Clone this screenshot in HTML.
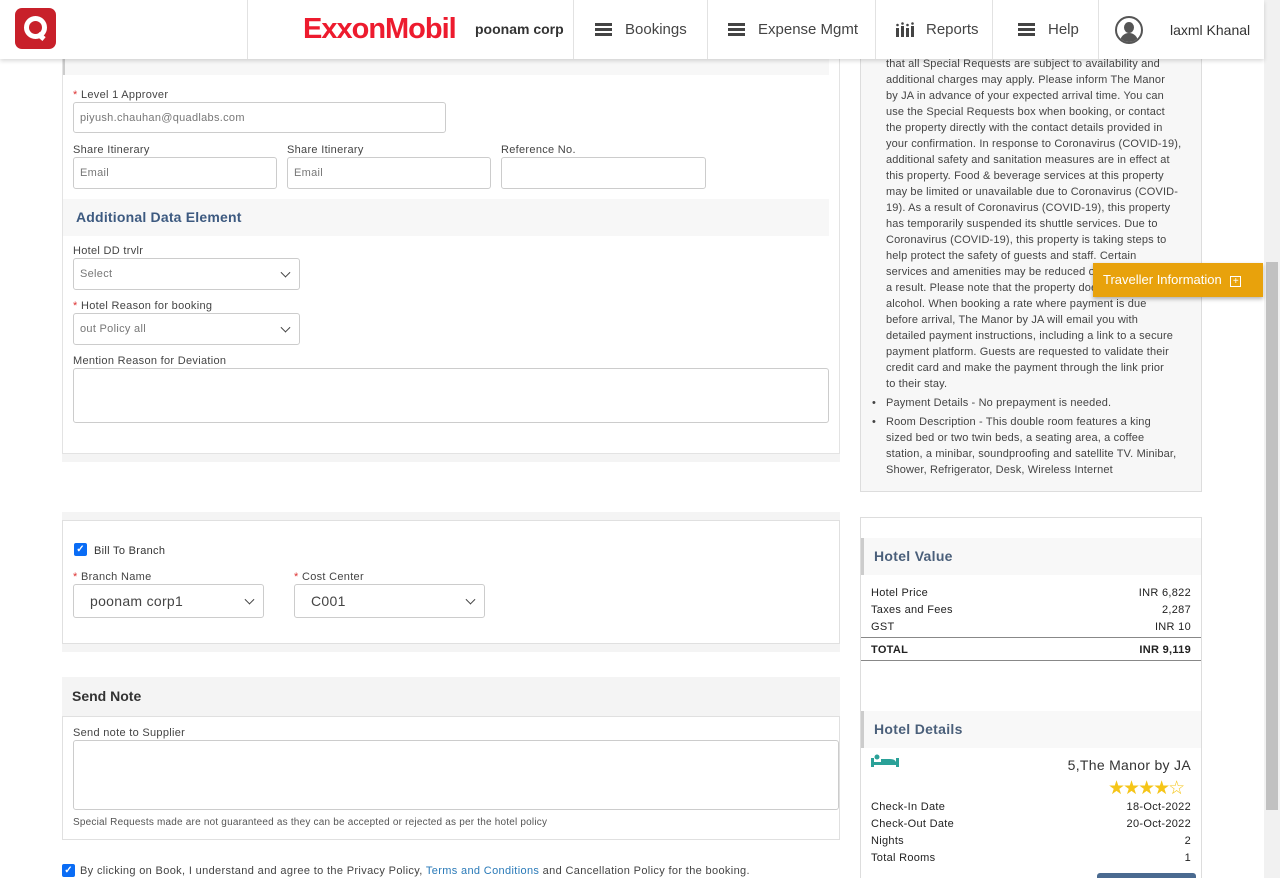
<!DOCTYPE html>
<html><head><meta charset="utf-8"><style>
*{box-sizing:border-box;margin:0;padding:0}
body{width:1280px;height:878px;overflow:hidden;background:#fff;font-family:"Liberation Sans",sans-serif;color:#333;position:relative}
.a{position:absolute}
.lbl{font-size:11px;color:#444;letter-spacing:.3px}
.req{color:#d33}
.inp{position:absolute;border:1px solid #ccc;border-radius:3px;background:#fff;font-size:11px;color:#777;padding-left:6px;display:flex;align-items:center;letter-spacing:.3px}
.sel::after{content:"";position:absolute;right:10px;top:50%;width:6px;height:6px;border-right:1.5px solid #444;border-bottom:1.5px solid #444;transform:translateY(-70%) rotate(45deg)}
.nav{position:absolute;top:0;height:59px;display:flex;align-items:center;font-size:15px;color:#444;border-left:1px solid #e2e2e2}
.ham{display:inline-block;width:17px;height:13px;border-top:3px solid #444;border-bottom:3px solid #444;position:relative;margin-right:13px}
.ham::after{content:"";position:absolute;left:0;right:0;top:2px;height:3px;background:#444}
.rp{font-size:11px;color:#444;line-height:16px;white-space:nowrap;letter-spacing:.15px}
.row{position:absolute;left:871px;width:320px;font-size:11px;color:#222;display:flex;justify-content:space-between;letter-spacing:.3px}
</style></head><body>
<div class="a" style="left:0;top:0;width:1264px;height:59px;background:#fff;box-shadow:0 2px 4px rgba(0,0,0,.15);z-index:5">
 <div class="a" style="left:15px;top:8px;width:41px;height:41px;background:#c8202a;border-radius:7px">
  <div class="a" style="left:9px;top:8px;width:23px;height:23px;border:5px solid #fff;border-radius:50%"></div>
  <div class="a" style="left:22px;top:26px;width:8px;height:5px;background:#fff;transform:rotate(40deg)"></div>
 </div>
 <div class="a" style="left:247px;top:0;height:59px;border-left:1px solid #e2e2e2"></div>
 <div class="a" style="left:303px;top:13px;font-size:29px;font-weight:bold;color:#ed1b2e;letter-spacing:-1px">ExxonMobil</div>
 <div class="a" style="left:475px;top:21px;font-size:14px;color:#333;font-weight:bold">poonam corp</div>
 <div class="nav" style="left:573px;width:134px;padding-left:21px"><span class="ham"></span>Bookings</div>
 <div class="nav" style="left:707px;width:168px;padding-left:20px"><span class="ham"></span>Expense Mgmt</div>
 <div class="nav" style="left:875px;width:117px;padding-left:20px"><svg width="18" height="15" viewBox="0 0 18 15" style="margin-right:12px"><rect x="0" y="6" width="3" height="9" fill="#444"/><rect x="5" y="4" width="3" height="11" fill="#444"/><rect x="10" y="6" width="3" height="9" fill="#444"/><rect x="15" y="4" width="3" height="11" fill="#444"/><circle cx="1.5" cy="3" r="1.3" fill="#444"/><circle cx="6.5" cy="1.5" r="1.3" fill="#444"/><circle cx="11.5" cy="3" r="1.3" fill="#444"/><circle cx="16.5" cy="1.5" r="1.3" fill="#444"/></svg>Reports</div>
 <div class="nav" style="left:992px;width:106px;padding-left:25px"><span class="ham"></span>Help</div>
 <div class="nav" style="left:1098px;width:166px;padding-left:16px"><span style="display:inline-block;width:28px;height:28px;border:2px solid #555;border-radius:50%;margin-right:27px;position:relative;overflow:hidden"><span class="a" style="left:7px;top:4px;width:10px;height:11px;background:#555;border-radius:50%"></span><span class="a" style="left:3px;top:15px;width:18px;height:12px;background:#555;border-radius:9px 9px 0 0"></span></span><span style="font-size:14px;color:#333">laxml Khanal</span></div>
</div>
<div class="a" style="left:1264px;top:0;width:16px;height:878px;background:#f1f1f1"></div>
<div class="a" style="left:1266px;top:262px;width:12px;height:548px;background:#c1c1c1"></div>

<div class="a" style="left:62px;top:56px;width:767px;height:19px;background:#f7f7f7;border-left:3px solid #ccc"></div>
<div class="a" style="left:62px;top:56px;width:778px;height:398px;border:1px solid #e3e3e3;border-top:none"></div>
<div class="a lbl" style="left:73px;top:89px"><span class="req">*</span> Level 1 Approver</div>
<div class="inp" style="left:73px;top:102px;width:373px;height:31px">piyush.chauhan@quadlabs.com</div>
<div class="a lbl" style="left:73px;top:144px">Share Itinerary</div>
<div class="a lbl" style="left:287px;top:144px">Share Itinerary</div>
<div class="a lbl" style="left:501px;top:144px">Reference No.</div>
<div class="inp" style="left:73px;top:157px;width:204px;height:32px">Email</div>
<div class="inp" style="left:287px;top:157px;width:204px;height:32px">Email</div>
<div class="inp" style="left:501px;top:157px;width:205px;height:32px"></div>
<div class="a" style="left:63px;top:199px;width:766px;height:37px;background:#f7f7f7;font-size:14px;color:#3d5a80;padding:10px 0 0 13px;font-weight:bold;letter-spacing:.2px">Additional Data Element</div>
<div class="a lbl" style="left:73px;top:245px">Hotel DD trvlr</div>
<div class="inp sel" style="left:73px;top:258px;width:227px;height:32px">Select</div>
<div class="a lbl" style="left:73px;top:300px"><span class="req">*</span> Hotel Reason for booking</div>
<div class="inp sel" style="left:73px;top:313px;width:227px;height:32px">out Policy all</div>
<div class="a lbl" style="left:73px;top:355px">Mention Reason for Deviation</div>
<div class="inp" style="left:73px;top:368px;width:756px;height:55px"></div>
<div class="a" style="left:62px;top:454px;width:778px;height:8px;background:#f4f4f4"></div>

<div class="a" style="left:62px;top:512px;width:778px;height:8px;background:#f4f4f4"></div>
<div class="a" style="left:62px;top:520px;width:778px;height:124px;border:1px solid #e0e0e0"></div>
<div class="a" style="left:74px;top:543px;width:13px;height:13px;background:#0a6cf5;border-radius:2px;color:#fff;font-size:10px;text-align:center;line-height:13px;font-weight:bold">✓</div>
<div class="a lbl" style="left:94px;top:545px;color:#333">Bill To Branch</div>
<div class="a lbl" style="left:73px;top:571px"><span class="req">*</span> Branch Name</div>
<div class="a lbl" style="left:294px;top:571px"><span class="req">*</span> Cost Center</div>
<div class="inp sel" style="left:73px;top:584px;width:191px;height:34px;font-size:14px;color:#444;padding-left:16px">poonam corp1</div>
<div class="inp sel" style="left:294px;top:584px;width:191px;height:34px;font-size:14px;color:#444;padding-left:16px">C001</div>
<div class="a" style="left:62px;top:644px;width:778px;height:8px;background:#f4f4f4"></div>

<div class="a" style="left:62px;top:677px;width:778px;height:39px;background:#f4f4f4;font-size:14px;font-weight:bold;color:#333;padding:11px 0 0 10px">Send Note</div>
<div class="a" style="left:62px;top:716px;width:778px;height:124px;border:1px solid #e0e0e0"></div>
<div class="a lbl" style="left:73px;top:727px">Send note to Supplier</div>
<div class="inp" style="left:73px;top:740px;width:766px;height:70px"></div>
<div class="a" style="left:73px;top:817px;font-size:10px;color:#555;letter-spacing:.2px">Special Requests made are not guaranteed as they can be accepted or rejected as per the hotel policy</div>
<div class="a" style="left:62px;top:864px;width:13px;height:13px;background:#0a6cf5;border-radius:2px;color:#fff;font-size:10px;text-align:center;line-height:13px;font-weight:bold">✓</div>
<div class="a" style="left:80px;top:865px;font-size:11px;color:#444;letter-spacing:.35px">By clicking on Book, I understand and agree to the Privacy Policy, <span style="color:#2a7ab8">Terms and Conditions</span> and Cancellation Policy for the booking.</div>

<div class="a" style="left:860px;top:50px;width:342px;height:442px;background:#f7f7f7;border:1px solid #ddd"></div>
<div class="a rp" style="left:886px;top:56px">that all Special Requests are subject to availability and<br>additional charges may apply. Please inform The Manor<br>by JA in advance of your expected arrival time. You can<br>use the Special Requests box when booking, or contact<br>the property directly with the contact details provided in<br>your confirmation. In response to Coronavirus (COVID-19),<br>additional safety and sanitation measures are in effect at<br>this property. Food &amp; beverage services at this property<br>may be limited or unavailable due to Coronavirus (COVID-<br>19). As a result of Coronavirus (COVID-19), this property<br>has temporarily suspended its shuttle services. Due to<br>Coronavirus (COVID-19), this property is taking steps to<br>help protect the safety of guests and staff. Certain<br>services and amenities may be reduced or unavailable as<br>a result. Please note that the property does not serve<br>alcohol. When booking a rate where payment is due<br>before arrival, The Manor by JA will email you with<br>detailed payment instructions, including a link to a secure<br>payment platform. Guests are requested to validate their<br>credit card and make the payment through the link prior<br>to their stay.</div>
<div class="a rp" style="left:872px;top:395px">•</div>
<div class="a rp" style="left:886px;top:395px">Payment Details - No prepayment is needed.</div>
<div class="a rp" style="left:872px;top:414px">•</div>
<div class="a rp" style="left:886px;top:414px">Room Description - This double room features a king<br>sized bed or two twin beds, a seating area, a coffee<br>station, a minibar, soundproofing and satellite TV. Minibar,<br>Shower, Refrigerator, Desk, Wireless Internet</div>

<div class="a" style="left:1093px;top:263px;width:170px;height:34px;background:#e8a20c;color:#fff;font-size:13px;padding:9px 0 0 10px;box-shadow:0 2px 4px rgba(0,0,0,.3);z-index:6">Traveller Information <span style="display:inline-block;width:11px;height:11px;border:1px solid #fff;font-size:10px;line-height:9px;text-align:center;margin-left:5px">+</span></div>

<div class="a" style="left:860px;top:517px;width:342px;height:361px;border:1px solid #ddd;border-bottom:none"></div>
<div class="a" style="left:861px;top:538px;width:340px;height:37px;background:#f8f8f8;border-left:3px solid #ccc;font-size:14px;font-weight:bold;color:#4a5f7a;padding:10px 0 0 10px;letter-spacing:.3px">Hotel Value</div>
<div class="row" style="top:587px"><span>Hotel Price</span><span>INR 6,822</span></div>
<div class="row" style="top:604px"><span>Taxes and Fees</span><span>2,287</span></div>
<div class="row" style="top:621px"><span>GST</span><span>INR 10</span></div>
<div class="a" style="left:861px;top:637px;width:340px;border-top:1px solid #888"></div>
<div class="row" style="top:644px;font-weight:bold"><span>TOTAL</span><span>INR 9,119</span></div>
<div class="a" style="left:861px;top:660px;width:340px;border-top:1px solid #888"></div>
<div class="a" style="left:861px;top:711px;width:340px;height:37px;background:#f8f8f8;border-left:3px solid #ccc;font-size:14px;font-weight:bold;color:#4a5f7a;padding:10px 0 0 10px;letter-spacing:.3px">Hotel Details</div>
<svg class="a" style="left:871px;top:754px" width="28" height="14" viewBox="0 0 28 14"><rect x="0" y="4" width="3" height="9" fill="#2aa198"/><rect x="25" y="4" width="3" height="9" fill="#2aa198"/><rect x="0" y="8" width="28" height="3" fill="#2aa198"/><circle cx="6" cy="3" r="2.5" fill="#2aa198"/><path d="M10 5h9q5 0 6 3H10z" fill="#2aa198"/></svg>
<div class="a" style="left:1030px;top:757px;width:161px;text-align:right;font-size:14px;color:#333;letter-spacing:.3px">5,The Manor by JA</div>
<div class="a" style="left:1108px;top:779px;font-size:19px;color:#f5c518;letter-spacing:-2px;line-height:20px">★★★★<span>☆</span></div>
<div class="row" style="top:801px"><span>Check-In Date</span><span>18-Oct-2022</span></div>
<div class="row" style="top:818px"><span>Check-Out Date</span><span>20-Oct-2022</span></div>
<div class="row" style="top:835px"><span>Nights</span><span>2</span></div>
<div class="row" style="top:852px"><span>Total Rooms</span><span>1</span></div>
<div class="a" style="left:1097px;top:873px;width:99px;height:5px;background:#4a6a90;border-radius:3px 3px 0 0"></div>
</body></html>
